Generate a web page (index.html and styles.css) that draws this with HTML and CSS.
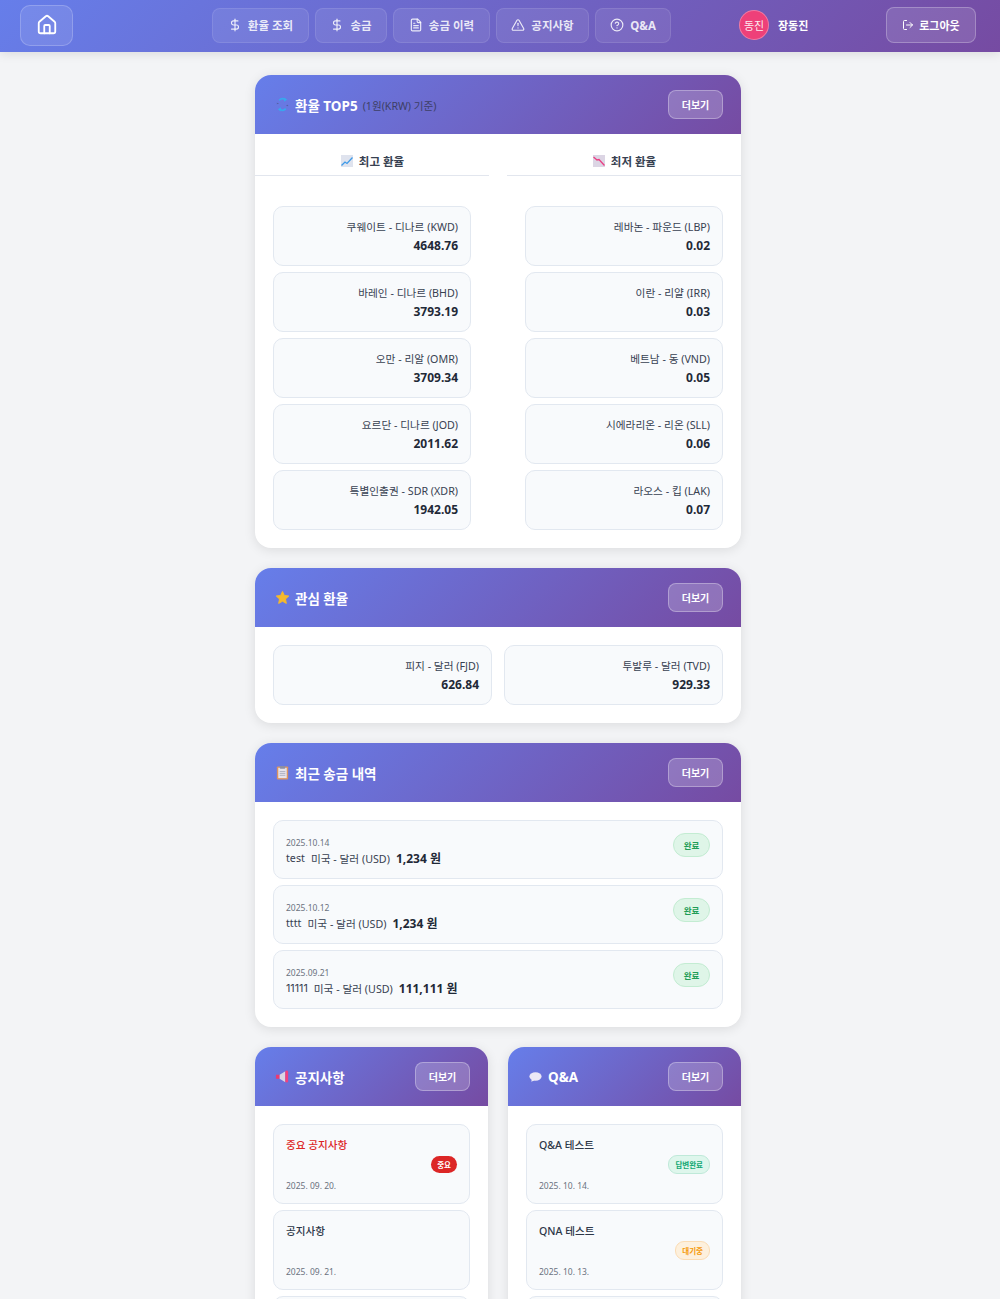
FILE: index.html
```html
<!DOCTYPE html>
<html lang="ko">
<head>
  <meta charset="UTF-8" />
  <meta name="viewport" content="width=device-width, initial-scale=1.0">
  <title>환율 송금</title>
  <link rel="stylesheet" href="styles.css">
</head>
<body>
  <header class="topbar">
    <a class="home-btn">
      <svg width="22" height="22" viewBox="0 0 24 24" fill="none" stroke="currentColor" stroke-width="2" stroke-linecap="round" stroke-linejoin="round"><path d="M15 21v-8a1 1 0 0 0-1-1h-4a1 1 0 0 0-1 1v8"/><path d="M3 10a2 2 0 0 1 .709-1.528l7-5.999a2 2 0 0 1 2.582 0l7 5.999A2 2 0 0 1 21 10v9a2 2 0 0 1-2 2H5a2 2 0 0 1-2-2z"/></svg>
    </a>
    <nav class="nav">
      <a class="nav-btn nav-rate"><svg class="nav-icon" viewBox="0 0 24 24"><line x1="12" x2="12" y1="2" y2="22"/><path d="M17 5H9.5a3.5 3.5 0 0 0 0 7h5a3.5 3.5 0 0 1 0 7H6"/></svg>환율 조회</a>
      <a class="nav-btn nav-send"><svg class="nav-icon" viewBox="0 0 24 24"><line x1="12" x2="12" y1="2" y2="22"/><path d="M17 5H9.5a3.5 3.5 0 0 0 0 7h5a3.5 3.5 0 0 1 0 7H6"/></svg>송금</a>
      <a class="nav-btn nav-history"><svg class="nav-icon" viewBox="0 0 24 24"><path d="M15 2H6a2 2 0 0 0-2 2v16a2 2 0 0 0 2 2h12a2 2 0 0 0 2-2V7z"/><path d="M14 2v4a2 2 0 0 0 2 2h4"/><path d="M16 13H8"/><path d="M16 17H8"/><path d="M10 9H8"/></svg>송금 이력</a>
      <a class="nav-btn nav-notice"><svg class="nav-icon" viewBox="0 0 24 24"><path d="m21.73 18-8-14a2 2 0 0 0-3.48 0l-8 14A2 2 0 0 0 4 21h16a2 2 0 0 0 1.73-3"/><path d="M12 9v4"/><path d="M12 17h.01"/></svg>공지사항</a>
      <a class="nav-btn nav-qna"><svg class="nav-icon" viewBox="0 0 24 24"><circle cx="12" cy="12" r="10"/><path d="M9.09 9a3 3 0 0 1 5.83 1c0 2-3 3-3 3"/><path d="M12 17h.01"/></svg>Q&amp;A</a>
    </nav>
    <div class="user">
      <span class="avatar">동진</span>
      <span class="user-name">장동진</span>
    </div>
    <a class="logout-btn"><svg class="nav-icon" viewBox="0 0 24 24"><path d="M9 21H5a2 2 0 0 1-2-2V5a2 2 0 0 1 2-2h4"/><polyline points="16 17 21 12 16 7"/><line x1="21" x2="9" y1="12" y2="12"/></svg>로그아웃</a>
  </header>

  <main class="container">
    <section class="card">
      <div class="card-head">
        <h2 class="card-title">
          <svg class="emoji" viewBox="0 0 16 16" fill="none"><path d="M3 7.500a2 2 0 0 1 0-1" stroke="#5561a8" stroke-width="2"/><path d="M13 8.500a2 2 0 0 1 0 1" stroke="#5561a8" stroke-width="2"/><path d="M4.500 3.500A5 5 0 0 1 11 3" stroke="#38a8ee" stroke-width="1.800"/><path d="M11.500 12.500A5 5 0 0 1 5 13" stroke="#38a8ee" stroke-width="1.800"/><path d="M10 0.500l3 2.500-3.500 2z" fill="#38a8ee"/><path d="M6 15.500l-3-2.500 3.500-2z" fill="#38a8ee"/></svg>
          환율 TOP5 <small class="card-sub">(1원(KRW) 기준)</small>
        </h2>
        <a class="more-btn">더보기</a>
      </div>
      <div class="tabs">
        <div class="tab">
          <svg class="tab-icon" viewBox="0 0 14 14"><rect x="1" y="1" width="12" height="12" fill="#dfe3ee"/><path d="M1.500 11.500 5 8l2 1.500 5.500-6" fill="none" stroke="#3f9be8" stroke-width="1.300"/></svg>
          최고 환율
        </div>
        <div class="tab">
          <svg class="tab-icon" viewBox="0 0 14 14"><rect x="1" y="1" width="12" height="12" fill="#dcd5e4"/><path d="M1.500 3 5 6l2-.5 5.500 6" fill="none" stroke="#ea3f83" stroke-width="1.300"/></svg>
          최저 환율
        </div>
      </div>
      <div class="top-lists">
        <div class="rate-list">
          <div class="rate-item"><span class="rate-name">쿠웨이트 - 디나르 (KWD)</span><strong class="rate-value">4648.76</strong></div>
          <div class="rate-item"><span class="rate-name">바레인 - 디나르 (BHD)</span><strong class="rate-value">3793.19</strong></div>
          <div class="rate-item"><span class="rate-name">오만 - 리알 (OMR)</span><strong class="rate-value">3709.34</strong></div>
          <div class="rate-item"><span class="rate-name">요르단 - 디나르 (JOD)</span><strong class="rate-value">2011.62</strong></div>
          <div class="rate-item"><span class="rate-name">특별인출권 - SDR (XDR)</span><strong class="rate-value">1942.05</strong></div>
        </div>
        <div class="rate-list">
          <div class="rate-item"><span class="rate-name">레바논 - 파운드 (LBP)</span><strong class="rate-value">0.02</strong></div>
          <div class="rate-item"><span class="rate-name">이란 - 리얄 (IRR)</span><strong class="rate-value">0.03</strong></div>
          <div class="rate-item"><span class="rate-name">베트남 - 동 (VND)</span><strong class="rate-value">0.05</strong></div>
          <div class="rate-item"><span class="rate-name">시에라리온 - 리온 (SLL)</span><strong class="rate-value">0.06</strong></div>
          <div class="rate-item"><span class="rate-name">라오스 - 킵 (LAK)</span><strong class="rate-value">0.07</strong></div>
        </div>
      </div>
    </section>

    <section class="card">
      <div class="card-head">
        <h2 class="card-title">
          <svg class="emoji" viewBox="0 0 16 16"><path d="M8 1.500l2 4.300 4.700.6-3.500 3.200.9 4.700L8 12l-4.100 2.300.9-4.700L1.300 6.400 6 5.800z" fill="#f5b92c" stroke="#f5b92c" stroke-linejoin="round"/></svg>
          관심 환율
        </h2>
        <a class="more-btn">더보기</a>
      </div>
      <div class="card-body fav-grid">
        <div class="rate-item"><span class="rate-name">피지 - 달러 (FJD)</span><strong class="rate-value">626.84</strong></div>
        <div class="rate-item"><span class="rate-name">투발루 - 달러 (TVD)</span><strong class="rate-value">929.33</strong></div>
      </div>
    </section>

    <section class="card">
      <div class="card-head">
        <h2 class="card-title">
          <svg class="emoji" viewBox="0 0 16 16"><rect x="2" y="1.500" width="12" height="14" rx="1" fill="#dc9460"/><rect x="3.500" y="3" width="9" height="11" fill="#e6e3ec"/><rect x="5" y="1" width="6" height="3" rx="1" fill="#8d8fa3"/><path d="M5 7h6M5 9h6M5 11h6" stroke="#aeb0c0"/></svg>
          최근 송금 내역
        </h2>
        <a class="more-btn">더보기</a>
      </div>
      <div class="card-body stack">
        <div class="send-item">
          <div class="send-info">
            <span class="send-date">2025.10.14</span>
            <div class="send-line"><span>test</span><span>미국 - 달러 (USD)</span><strong class="send-amount">1,234 원</strong></div>
          </div>
          <span class="status status-done">완료</span>
        </div>
        <div class="send-item">
          <div class="send-info">
            <span class="send-date">2025.10.12</span>
            <div class="send-line"><span>tttt</span><span>미국 - 달러 (USD)</span><strong class="send-amount">1,234 원</strong></div>
          </div>
          <span class="status status-done">완료</span>
        </div>
        <div class="send-item">
          <div class="send-info">
            <span class="send-date">2025.09.21</span>
            <div class="send-line"><span class="send-digits">11111</span><span>미국 - 달러 (USD)</span><strong class="send-amount">111,111 원</strong></div>
          </div>
          <span class="status status-done">완료</span>
        </div>
      </div>
    </section>

    <div class="two-col">
      <section class="card">
        <div class="card-head">
          <h2 class="card-title">
            <svg class="emoji" viewBox="0 0 16 16"><path d="M1 6h4v4.500H1z" fill="#ea3a72"/><path d="M5 6l6-3.500v11.500L5 10.500z" fill="#d9d6e4"/><rect x="11" y="1.500" width="3" height="13" rx="1.500" fill="#f0417e"/></svg>
            공지사항
          </h2>
          <a class="more-btn">더보기</a>
        </div>
        <div class="card-body stack">
          <div class="post-item">
            <span class="post-title post-title-red">중요 공지사항</span>
            <div class="post-badge-row"><span class="tag tag-red">중요</span></div>
            <span class="post-date">2025. 09. 20.</span>
          </div>
          <div class="post-item">
            <span class="post-title">공지사항</span>
            <div class="post-badge-row"></div>
            <span class="post-date">2025. 09. 21.</span>
          </div>
          <div class="post-item"></div>
        </div>
      </section>

      <section class="card">
        <div class="card-head">
          <h2 class="card-title">
            <svg class="emoji" viewBox="0 0 16 16"><ellipse cx="8" cy="8" rx="6.500" ry="4.500" fill="#ece8f6"/><path d="M4 11 3.500 13.500 7 12z" fill="#ece8f6"/></svg>
            Q&amp;A
          </h2>
          <a class="more-btn">더보기</a>
        </div>
        <div class="card-body stack">
          <div class="post-item">
            <span class="post-title">Q&amp;A 테스트</span>
            <div class="post-badge-row"><span class="tag tag-green">답변완료</span></div>
            <span class="post-date">2025. 10. 14.</span>
          </div>
          <div class="post-item">
            <span class="post-title">QNA 테스트</span>
            <div class="post-badge-row"><span class="tag tag-orange">대기중</span></div>
            <span class="post-date">2025. 10. 13.</span>
          </div>
          <div class="post-item"></div>
        </div>
      </section>
    </div>
  </main>
</body>
</html>
```

FILE: styles.css
```css
* {
  box-sizing: border-box;
}

body {
  margin: 0;
  background: #f3f4f6;
  color: #2d3748;
  font-family: "Noto Sans", "Noto Sans CJK KR", sans-serif;
  font-size: 12px;
}

h2 {
  margin: 0;
}

/* top bar */
.topbar {
  display: flex;
  align-items: center;
  height: 52px;
  padding: 0 24px 2px 20px;
  background: linear-gradient(135deg, #667eea 0%, #764ba2 100%);
  box-shadow: 0 2px 10px rgba(0, 0, 0, 0.1);
  color: #fff;
}

.home-btn {
  display: flex;
  align-items: center;
  justify-content: center;
  width: 53px;
  height: 41px;
  border: 1px solid rgba(255, 255, 255, 0.2);
  border-radius: 10px;
  background: rgba(255, 255, 255, 0.1);
}

.nav {
  display: flex;
  gap: 6px;
  margin-left: 139px;
}

.nav-btn {
  display: flex;
  align-items: center;
  justify-content: center;
  gap: 6px;
  height: 35px;
  border: 1px solid rgba(255, 255, 255, 0.1);
  border-radius: 8px;
  background: rgba(255, 255, 255, 0.08);
  color: rgba(255, 255, 255, 0.85);
  font-size: 11.5px;
  font-weight: 700;
}

.nav-rate { width: 97px; }
.nav-send { width: 72px; }
.nav-history { width: 97px; }
.nav-notice { width: 93px; }
.nav-qna { width: 76px; }

.nav-icon {
  width: 14px;
  height: 14px;
  fill: none;
  stroke: currentColor;
  stroke-width: 2;
  stroke-linecap: round;
  stroke-linejoin: round;
}

.user {
  display: flex;
  align-items: center;
  gap: 9px;
  margin-left: 68px;
}

.avatar {
  display: flex;
  align-items: center;
  justify-content: center;
  width: 30px;
  height: 30px;
  border: 1px solid rgba(255, 255, 255, 0.3);
  border-radius: 50%;
  background: #ee4079;
  font-size: 11px;
  color: rgba(255, 255, 255, 0.9);
}

.user-name {
  font-size: 11px;
  font-weight: 700;
  margin-top: -1px;
}

.logout-btn {
  display: flex;
  align-items: center;
  justify-content: center;
  gap: 5px;
  width: 90px;
  height: 36px;
  margin-left: auto;
  border: 1px solid rgba(255, 255, 255, 0.25);
  border-radius: 8px;
  background: rgba(255, 255, 255, 0.12);
  font-size: 11px;
  font-weight: 700;
}

.logout-btn .nav-icon {
  width: 12px;
  height: 12px;
}

/* cards */
.container {
  display: flex;
  flex-direction: column;
  gap: 20px;
  width: 486px;
  margin: 23px 0 0 255px;
}

.card {
  overflow: hidden;
  border-radius: 16px;
  background: #fff;
  box-shadow: 0 2px 12px rgba(0, 0, 0, 0.1);
}

.card-head {
  display: flex;
  align-items: center;
  justify-content: space-between;
  height: 59px;
  padding: 0 18px 0 20px;
  background: linear-gradient(135deg, #667eea 0%, #764ba2 100%);
  color: #fff;
}

.card-title {
  display: flex;
  align-items: center;
  gap: 5px;
  font-size: 13.5px;
  font-weight: 700;
}

.card-sub {
  margin-top: 2px;
  color: #3d3f66;
  font-size: 10.6px;
  font-weight: 400;
}

.emoji {
  width: 15px;
  height: 15px;
}

.more-btn {
  display: flex;
  align-items: center;
  justify-content: center;
  width: 55px;
  height: 29px;
  border: 1px solid rgba(255, 255, 255, 0.3);
  border-radius: 8px;
  background: rgba(255, 255, 255, 0.2);
  font-size: 10px;
  font-weight: 700;
}

.card-body {
  padding: 18px;
}

.stack {
  display: flex;
  flex-direction: column;
  gap: 6px;
}

/* top5 */
.tabs {
  display: grid;
  grid-template-columns: 234px 234px;
  justify-content: space-between;
}

.tab {
  display: flex;
  align-items: center;
  justify-content: center;
  gap: 5px;
  height: 42px;
  padding-top: 12px;
  border-bottom: 1px solid #e2e6ee;
  color: #374151;
  font-size: 11.5px;
  font-weight: 700;
}

.tab-icon {
  width: 14px;
  height: 14px;
}

.top-lists {
  display: grid;
  grid-template-columns: 198px 198px;
  justify-content: space-between;
  padding: 30px 18px 18px;
}

.rate-list {
  display: flex;
  flex-direction: column;
  gap: 6px;
}

.rate-item {
  display: flex;
  flex-direction: column;
  align-items: flex-end;
  justify-content: center;
  gap: 3px;
  height: 60px;
  padding: 1px 12px 0;
  border: 1px solid #e2e8f0;
  border-radius: 10px;
  background: #f8fafc;
}

.rate-name {
  color: #374151;
  font-size: 10.7px;
}

.rate-value {
  color: #1f2937;
  font-size: 12px;
  font-weight: 700;
}

.fav-grid {
  display: grid;
  grid-template-columns: 1fr 1fr;
  gap: 12px;
}

/* recent transfers */
.send-item {
  display: flex;
  align-items: flex-start;
  justify-content: space-between;
  height: 59px;
  padding: 12px 12px 0;
  border: 1px solid #e2e8f0;
  border-radius: 10px;
  background: #f8fafc;
}

.send-info {
  display: flex;
  flex-direction: column;
  gap: 1px;
  padding-top: 4px;
}

.send-date {
  color: #6b7280;
  font-size: 8.5px;
}

.send-line {
  display: flex;
  align-items: center;
  gap: 6px;
  color: #374151;
  font-size: 10.7px;
}

.send-digits {
  font-family: "Inter", sans-serif;
}

.send-amount {
  color: #1f2937;
  font-size: 12px;
}

.status {
  display: flex;
  align-items: center;
  justify-content: center;
  width: 37px;
  height: 24px;
  border-radius: 12px;
  font-size: 8.500px;
  font-weight: 700;
}

.status-done {
  border: 1px solid #c3ecd2;
  background: #dff5e8;
  color: #1f9d57;
}

/* notices and q&a */
.two-col {
  display: grid;
  grid-template-columns: 233px 233px;
  justify-content: space-between;
  padding-bottom: 20px;
}

.post-item {
  display: flex;
  flex-direction: column;
  height: 80px;
  padding: 12px 12px 0;
  border: 1px solid #e2e8f0;
  border-radius: 10px;
  background: #f8fafc;
}

.post-title {
  color: #2d3748;
  font-size: 10.6px;
  font-weight: 500;
  line-height: 16px;
}

.post-title-red {
  color: #dc2626;
}

.post-badge-row {
  display: flex;
  justify-content: flex-end;
  align-items: center;
  height: 20px;
  margin-top: 1px;
}

.post-date {
  margin-top: 5px;
  color: #6b7280;
  font-size: 8.5px;
  line-height: 14px;
}

.tag {
  display: flex;
  align-items: center;
  justify-content: center;
  height: 17px;
  padding: 0 6px;
  border-radius: 9px;
  font-size: 7.5px;
  font-weight: 700;
}

.tag-red {
  background: #dc2626;
  color: #fff;
}

.tag-green {
  height: 19px;
  border: 1px solid #bfe9d9;
  background: #def6ec;
  color: #10a873;
}

.tag-orange {
  height: 19px;
  border: 1px solid #fbdcb4;
  background: #fdf0dd;
  color: #f59a0b;
}
```
